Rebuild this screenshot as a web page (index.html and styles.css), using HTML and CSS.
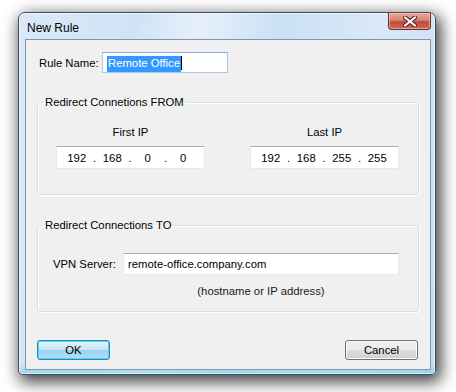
FILE: index.html
```html
<!DOCTYPE html>
<html lang="en">
  <head>
    <meta charset="utf-8" />
    <title>New Rule</title>
    <link rel="stylesheet" href="styles.css">
  </head>
  <body>
    <div class="window">
      <div class="titlebar">
        <span class="title">New Rule</span>
        <button class="close-btn" aria-label="Close">
          <svg width="14" height="11" viewBox="0 0 14 11">
            <path d="M2 1.5 L12 9.5 M12 1.5 L2 9.5" stroke="#5a2a24" stroke-width="4.2" stroke-linecap="round" />
            <path d="M2 1.5 L12 9.5 M12 1.5 L2 9.5" stroke="#fff" stroke-width="2.2" stroke-linecap="round" />
          </svg>
        </button>
      </div>

      <form class="client">
        <div class="rule-row">
          <label class="rule-label">Rule Name:</label>
          <div class="textbox rule-input"><span class="selected">Remote Office</span><span class="caret"></span></div>
        </div>

        <fieldset class="group group-from">
          <legend>Redirect Connetions FROM</legend>
          <div class="ip-columns">
            <div class="ip-col">
              <div class="ip-caption">First IP</div>
              <div class="textbox ip-box">
                <span class="octet">192</span><span class="dot">.</span>
                <span class="octet">168</span><span class="dot">.</span>
                <span class="octet">0</span><span class="dot">.</span>
                <span class="octet">0</span>
              </div>
            </div>
            <div class="ip-col">
              <div class="ip-caption">Last IP</div>
              <div class="textbox ip-box">
                <span class="octet">192</span><span class="dot">.</span>
                <span class="octet">168</span><span class="dot">.</span>
                <span class="octet">255</span><span class="dot">.</span>
                <span class="octet">255</span>
              </div>
            </div>
          </div>
        </fieldset>

        <fieldset class="group group-to">
          <legend>Redirect Connections TO</legend>
          <div class="vpn-row">
            <label class="vpn-label">VPN Server:</label>
            <div class="vpn-field">
              <div class="textbox vpn-input">remote-office.company.com</div>
              <div class="hint">(hostname or IP address)</div>
            </div>
          </div>
        </fieldset>

        <div class="actions">
          <button class="btn btn-default" type="button">OK</button>
          <button class="btn" type="button">Cancel</button>
        </div>
      </form>
    </div>
  </body>
</html>
```

FILE: styles.css
```css
/* Vista style dialog */
body {
  margin: 0;
  min-height: 392px;
  background: #fff;
  font-family: "Liberation Sans", Arial, sans-serif;
  font-size: 11.3px;
  color: #000;
}

.window {
  box-sizing: border-box;
  width: 418px;
  height: 363px;
  margin: 12px 0 0 18px;
  padding: 0 4px 4px 6px;
  border: 1px solid #434b57;
  border-radius: 7px 7px 4px 4px;
  background:
    linear-gradient(rgba(255, 255, 255, 0) 97%, rgba(110, 200, 240, 0.6) 100%),
    linear-gradient(100deg, #dbe9f7 0%, #d0e3f6 25%, #e6f0fa 38%, #cbe0f5 55%, #dae8f7 75%, #c9def3 100%);
  box-shadow: 3px 5px 16px 2px rgba(0, 0, 0, 0.75), inset 0 0 0 1px rgba(255, 255, 255, 0.6);
}

.titlebar {
  display: flex;
  justify-content: space-between;
  align-items: flex-start;
  height: 26px;
}

.title {
  font-size: 12px;
  padding: 8px 0 0 2px;
  line-height: 14px;
}

.close-btn {
  width: 43px;
  height: 17px;
  margin: 0;
  padding: 0;
  border: 1px solid #6b2e26;
  border-top: 0;
  border-radius: 0 0 4px 4px;
  background: linear-gradient(#e9a89c 0%, #d98373 45%, #c24a38 55%, #cf6a57 100%);
  box-shadow: inset 0 0 0 1px rgba(255, 220, 210, 0.5);
  display: flex;
  align-items: center;
  justify-content: center;
}

.client {
  box-sizing: border-box;
  height: 331px;
  margin: 0;
  padding: 0 11px;
  background: #f0f0f0;
  border: 1px solid #7e95ae;
}

.rule-row {
  display: flex;
  align-items: center;
  margin-top: 12px;
  padding-left: 2px;
}

.rule-label {
  width: 63px;
}

.textbox {
  box-sizing: border-box;
  background: #fff;
  border: 1px solid #e3e9ef;
  border-top-color: #abadb3;
}

.rule-input {
  width: 126px;
  height: 21px;
  padding: 3px 0 0 4px;
  border-color: #a5c8e8;
  border-top-color: #7eaad6;
  display: flex;
  line-height: 14px;
}

.selected {
  background: #3399ff;
  color: #fff;
  padding: 0 1px;
}

.caret {
  width: 1px;
  height: 14px;
  background: #000;
}

.group {
  margin: 0;
  padding: 0;
  border: 1px solid #d5dfe5;
  border-radius: 3px;
  box-shadow: inset 1px 1px 0 #fff, 1px 1px 0 #fff;
}

.group legend {
  margin-left: 5px;
  padding: 0 2px;
  line-height: 14px;
}

.group-from {
  margin-top: 22px;
  height: 98px;
}

.ip-columns {
  display: flex;
  justify-content: space-between;
  padding: 0 19px 0 18px;
  margin-top: 16px;
}

.ip-col {
  width: 149px;
  text-align: center;
}

.ip-caption {
  line-height: 14px;
  margin-bottom: 7px;
}

.ip-box {
  height: 23px;
  display: flex;
  align-items: center;
  padding-left: 5px;
}

.octet {
  width: 29.5px;
  text-align: center;
}

.dot {
  width: 6px;
  text-align: center;
}

.group-to {
  margin-top: 23px;
  height: 92px;
}

.vpn-row {
  display: flex;
  margin-top: 21px;
  padding-left: 15px;
}

.vpn-label {
  width: 70px;
  line-height: 22px;
}

.vpn-field {
  width: 276px;
  text-align: center;
}

.vpn-input {
  height: 22px;
  text-align: left;
  padding: 3px 0 0 4px;
  line-height: 14px;
}

.hint {
  margin-top: 9px;
  line-height: 14px;
  color: #1a1a1a;
}

.actions {
  display: flex;
  justify-content: space-between;
  margin-top: 28px;
  padding-right: 1px;
}

.btn {
  width: 73px;
  height: 20px;
  padding: 0;
  font: inherit;
  color: #000;
  border: 1px solid #707070;
  border-radius: 3px;
  background: linear-gradient(#f2f2f2 0%, #ebebeb 48%, #dddddd 52%, #cfcfcf 100%);
  box-shadow: inset 0 0 0 1px #fcfcfc;
}

.btn-default {
  border-color: #3c7fb1;
  background: linear-gradient(#e5f4fc 0%, #c4e5f6 48%, #98d1ef 52%, #b3e0f9 100%);
  box-shadow: inset 0 0 0 1px #48d8fb;
}
```
